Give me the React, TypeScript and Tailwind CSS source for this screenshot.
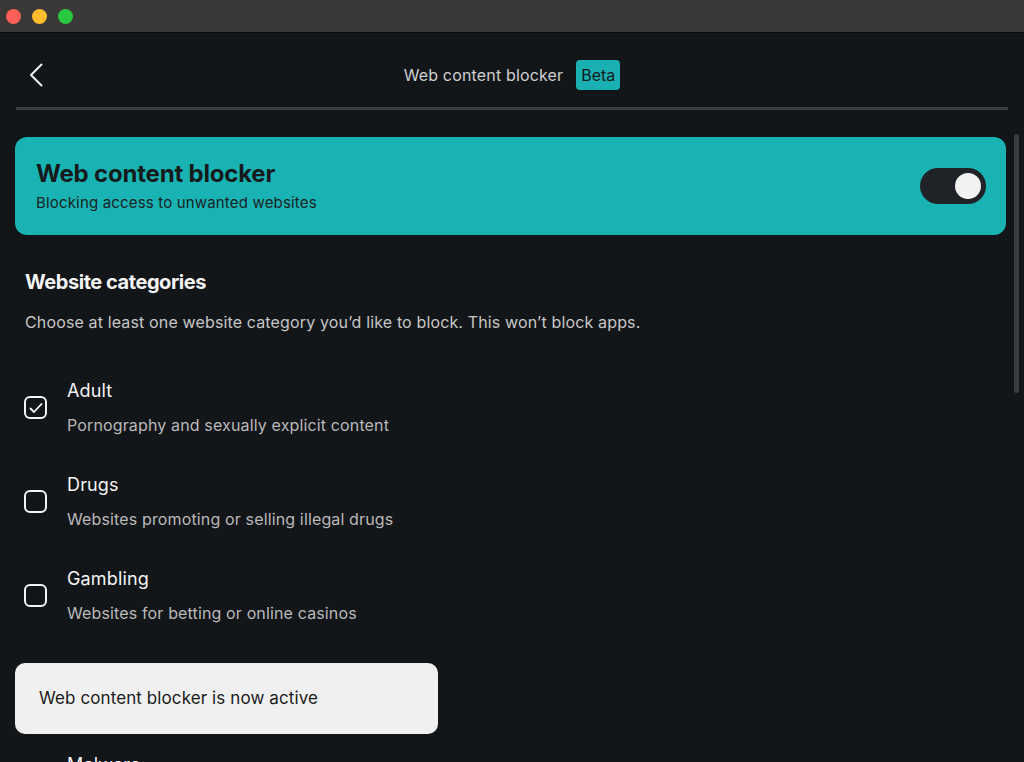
import { useState } from 'react'

const CATEGORIES = [
  { id: 'adult', title: 'Adult', subtitle: 'Pornography and sexually explicit content' },
  { id: 'drugs', title: 'Drugs', subtitle: 'Websites promoting or selling illegal drugs' },
  { id: 'gambling', title: 'Gambling', subtitle: 'Websites for betting or online casinos' },
]

function TitleBar() {
  return (
    <div className="h-[33px] shrink-0 bg-[#3b3937] border-b border-[#0b0c0d] flex items-center gap-[11px] pl-[6px]">
      <span className="w-[15px] h-[15px] rounded-full bg-[#fe5f57]" />
      <span className="w-[15px] h-[15px] rounded-full bg-[#febc2e]" />
      <span className="w-[15px] h-[15px] rounded-full bg-[#28c840]" />
    </div>
  )
}

function Checkbox({ checked, onClick }: { checked: boolean; onClick: () => void }) {
  return (
    <button
      onClick={onClick}
      className="w-[23px] h-[23px] shrink-0 rounded-[6px] border-[2.5px] border-[#f4f4f4] flex items-center justify-center"
    >
      {checked && (
        <svg width="14" height="14" viewBox="0 0 14 14" fill="none">
          <polyline points="1.5,7.5 5,11 12.5,3" stroke="#f4f4f4" strokeWidth="1.8" strokeLinecap="round" strokeLinejoin="round" />
        </svg>
      )}
    </button>
  )
}

function CategoryRow({
  title,
  subtitle,
  checked,
  onToggle,
}: {
  title: string
  subtitle: string
  checked: boolean
  onToggle: () => void
}) {
  return (
    <div className="flex items-center gap-[20px] -ml-[1px]">
      <Checkbox checked={checked} onClick={onToggle} />
      <div className="flex flex-col gap-[9px]">
        <span className="text-[18px] leading-[26px] tracking-[0.15px] text-[#f4f4f4]">{title}</span>
        <span className="text-[16px] leading-[24px] tracking-[0.14px] text-[#b9b9b9]">{subtitle}</span>
      </div>
    </div>
  )
}

export default function App() {
  const [enabled, setEnabled] = useState(true)
  const [checked, setChecked] = useState<Record<string, boolean>>({ adult: true })
  const toggle = (id: string) => setChecked({ ...checked, [id]: !checked[id] })

  return (
    <div
      className="w-[1024px] h-[762px] overflow-hidden bg-[#131619] flex flex-col relative"
      style={{ fontFamily: 'Inter, "Noto Sans", sans-serif' }}
    >
      <TitleBar />

      {/* Header */}
      <div className="relative mt-[27px] h-[30px] flex items-center justify-center gap-[13px]">
        <button className="absolute left-[29px] top-[3px]">
          <svg width="14" height="24" viewBox="0 0 14 24" fill="none">
            <polyline points="12.5,1.5 2,12 12.5,22.5" stroke="#f2f2f2" strokeWidth="2" strokeLinecap="round" strokeLinejoin="round" />
          </svg>
        </button>
        <span className="text-[16px] tracking-[0.16px] text-[#cfcfcf]">Web content blocker</span>
        <span className="h-[30px] px-[5px] rounded-[4px] bg-[#1aafb0] text-[16px] text-[#0f1a1c] flex items-center">Beta</span>
      </div>
      <div className="mt-[17px] mx-[16px] h-[3px] bg-[#3c3f42] shrink-0" />

      {/* Scroll content */}
      <div className="pl-[15px] pr-[18px] mt-[27px]">
        <div className="rounded-[12px] bg-[#1ab3b3] pl-[21px] pr-[20px] pt-[21px] pb-[22px] flex items-center justify-between">
          <div className="flex flex-col gap-[3px]">
            <h1 className="text-[24px] leading-[32px] font-bold tracking-[-0.2px] text-[#151a1c]">Web content blocker</h1>
            <p className="text-[15px] leading-[20px] tracking-[0.17px] text-[#182224]">Blocking access to unwanted websites</p>
          </div>
          <button
            onClick={() => setEnabled(!enabled)}
            className="w-[66px] h-[36px] rounded-full bg-[#1f2327] flex items-center px-[5px]"
          >
            <span className={`w-[26px] h-[26px] rounded-full bg-[#f2f2f2] ${enabled ? 'ml-[30px]' : 'ml-0'}`} />
          </button>
        </div>

        <div className="pl-[10px] mt-[33px] flex flex-col">
          <h2 className="text-[20px] leading-[28px] font-bold tracking-[-0.45px] text-[#f4f4f4]">Website categories</h2>
          <p className="mt-[14px] text-[16px] leading-[24px] tracking-[0.14px] text-[#c6c6c6]">
            Choose at least one website category you’d like to block. This won’t block apps.
          </p>

          <div className="mt-[44px] flex flex-col gap-[35px]">
            {CATEGORIES.map((c) => (
              <CategoryRow
                key={c.id}
                title={c.title}
                subtitle={c.subtitle}
                checked={!!checked[c.id]}
                onToggle={() => toggle(c.id)}
              />
            ))}
          </div>

          {/* Toast */}
          <div className="mt-[38px] -ml-[10px] w-[423px] h-[71px] shrink-0 rounded-[10px] bg-[#f0f0f0] flex items-center pl-[24px]">
            <span className="text-[17px] tracking-[0.1px] text-[#1a1a1a]">Web content blocker is now active</span>
          </div>

          <div className="mt-[18px]">
            <CategoryRow
              title="Malware"
              subtitle="Websites known to distribute malicious software"
              checked={!!checked.malware}
              onToggle={() => toggle('malware')}
            />
          </div>
        </div>
      </div>

      {/* Scrollbar */}
      <div className="absolute left-[1014px] top-[134px] w-[5px] h-[259px] rounded-full bg-[#3a3d40]" />
    </div>
  )
}
